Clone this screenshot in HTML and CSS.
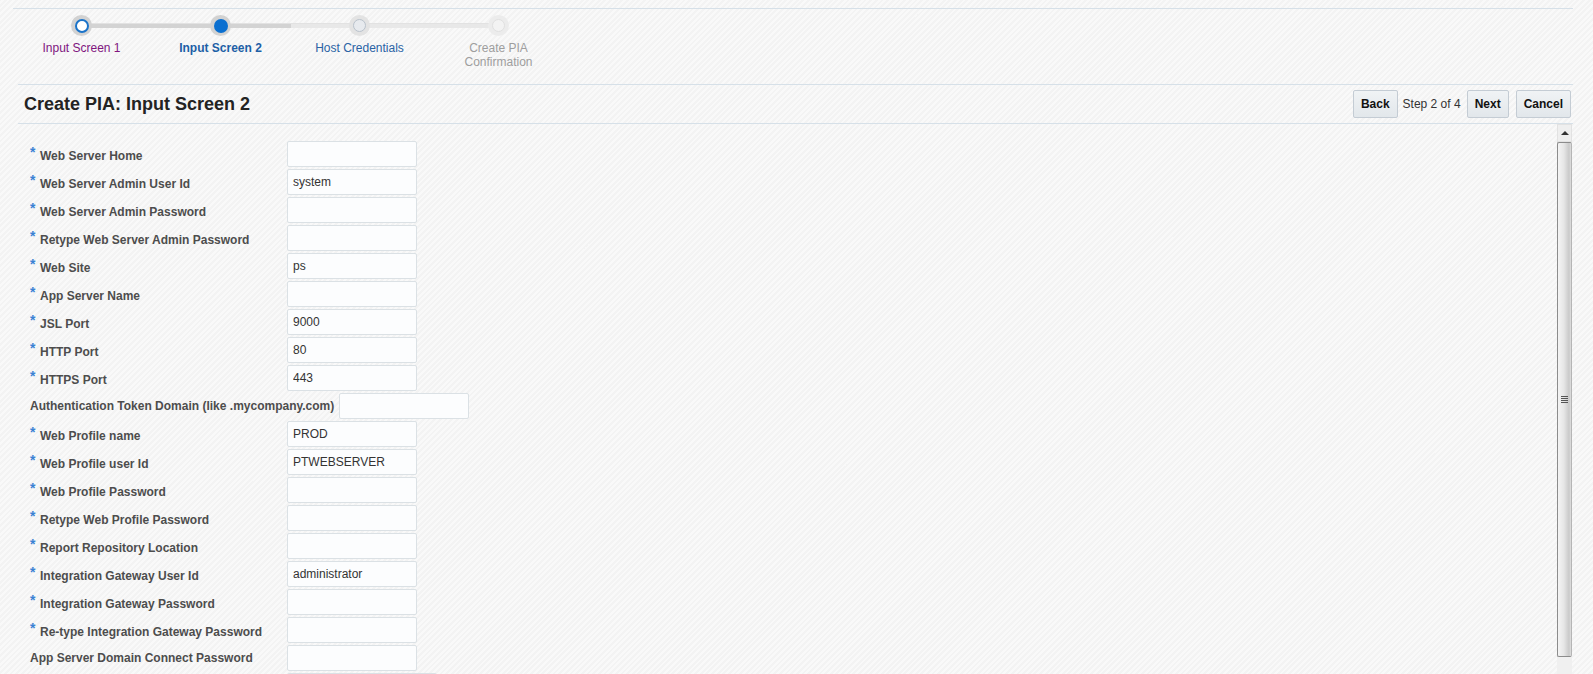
FILE: index.html
```html
<!DOCTYPE html>
<html lang="en">
<head>
<meta charset="utf-8">
<title>Create PIA: Input Screen 2</title>
<link rel="stylesheet" href="styles.css">
</head>
<body>
<div class="train">
  <div class="steps">
    <div class="step visited"><span class="dot"><span class="in"></span></span><span class="lbl">Input Screen 1</span></div>
    <div class="step current"><span class="dot"><span class="in"></span></span><span class="lbl">Input Screen 2</span></div>
    <div class="step next"><span class="dot"><span class="in"></span></span><span class="lbl">Host Credentials</span></div>
    <div class="step disabled"><span class="dot"><span class="in"></span></span><span class="lbl">Create PIA Confirmation</span></div>
  </div>
</div>
<div class="titlebar">
  <h1 class="title">Create PIA: Input Screen 2</h1>
  <div class="nav">
    <button class="btn" type="button">Back</button>
    <span class="stepno">Step 2 of 4</span>
    <button class="btn btn-next" type="button">Next</button>
    <button class="btn btn-cancel" type="button">Cancel</button>
  </div>
</div>
<div class="content">
  <form class="form">
    <div class="row"><label class="lbl-cell"><span class="req">*</span>Web Server Home</label><input class="field" type="text" value=""></div>
    <div class="row"><label class="lbl-cell"><span class="req">*</span>Web Server Admin User Id</label><input class="field" type="text" value="system"></div>
    <div class="row"><label class="lbl-cell"><span class="req">*</span>Web Server Admin Password</label><input class="field" type="password" value=""></div>
    <div class="row"><label class="lbl-cell"><span class="req">*</span>Retype Web Server Admin Password</label><input class="field" type="password" value=""></div>
    <div class="row"><label class="lbl-cell"><span class="req">*</span>Web Site</label><input class="field" type="text" value="ps"></div>
    <div class="row"><label class="lbl-cell"><span class="req">*</span>App Server Name</label><input class="field" type="text" value=""></div>
    <div class="row"><label class="lbl-cell"><span class="req">*</span>JSL Port</label><input class="field" type="text" value="9000"></div>
    <div class="row"><label class="lbl-cell"><span class="req">*</span>HTTP Port</label><input class="field" type="text" value="80"></div>
    <div class="row"><label class="lbl-cell"><span class="req">*</span>HTTPS Port</label><input class="field" type="text" value="443"></div>
    <div class="row"><label class="lbl-cell">Authentication Token Domain (like .mycompany.com)</label><input class="field" type="text" value=""></div>
    <div class="row"><label class="lbl-cell"><span class="req">*</span>Web Profile name</label><input class="field" type="text" value="PROD"></div>
    <div class="row"><label class="lbl-cell"><span class="req">*</span>Web Profile user Id</label><input class="field" type="text" value="PTWEBSERVER"></div>
    <div class="row"><label class="lbl-cell"><span class="req">*</span>Web Profile Password</label><input class="field" type="password" value=""></div>
    <div class="row"><label class="lbl-cell"><span class="req">*</span>Retype Web Profile Password</label><input class="field" type="password" value=""></div>
    <div class="row"><label class="lbl-cell"><span class="req">*</span>Report Repository Location</label><input class="field" type="text" value=""></div>
    <div class="row"><label class="lbl-cell"><span class="req">*</span>Integration Gateway User Id</label><input class="field" type="text" value="administrator"></div>
    <div class="row"><label class="lbl-cell"><span class="req">*</span>Integration Gateway Password</label><input class="field" type="password" value=""></div>
    <div class="row"><label class="lbl-cell"><span class="req">*</span>Re-type Integration Gateway Password</label><input class="field" type="password" value=""></div>
    <div class="row"><label class="lbl-cell">App Server Domain Connect Password</label><input class="field" type="password" value=""></div>
    <div class="row"><span class="lbl-cell"></span><input class="field wide" type="password" value=""></div>
  </form>
  <div class="vscroll">
    <div class="sb-up"><span class="sb-arrow"></span></div>
    <div class="sb-thumb"><span class="grip"></span></div>
    <div class="sb-track"></div>
  </div>
</div>
</body>
</html>
```
FILE: styles.css
```css
html, body {
  margin: 0;
  padding: 0;
}
body {
  height: 674px;
  overflow: hidden;
  padding-top: 8px;
  box-sizing: border-box;
  font-family: "Liberation Sans", Arial, sans-serif;
  font-size: 12px;
  color: #333;
  background-color: #f6f6f6;
  background-image: repeating-linear-gradient(-45deg, #f9f9f9 0 2px, #f3f3f3 2px 4px);
}

/* ---------- train ---------- */
.train {
  margin: 0 20px 0 13px;
  border-top: 1px solid #d6e0e8;
  height: 75px;
}
.steps {
  position: relative;
  display: flex;
  margin-left: -1px;
}
.steps::before {
  content: "";
  position: absolute;
  left: 70px;
  top: 14px;
  width: 418px;
  height: 5px;
  background: linear-gradient(to right, #d3d3d3 0 209px, #e8e8e8 209px);
  border-top: 1px solid #e2e2e2;
  box-sizing: border-box;
}
.step {
  width: 139px;
  display: flex;
  flex-direction: column;
  align-items: center;
}
.dot {
  position: relative;
  z-index: 1;
  margin-top: 6px;
  width: 21px;
  height: 21px;
  border-radius: 50%;
  background: #d2d2d2;
  display: flex;
  align-items: center;
  justify-content: center;
}
.in {
  width: 14px;
  height: 14px;
  border-radius: 50%;
  box-sizing: border-box;
}
.visited .in {
  background: #fff;
  border: 2px solid #1a73c9;
}
.current .in {
  background: #0a6fd0;
}
.next .dot {
  background: #e3e3e3;
}
.next .in {
  width: 13px;
  height: 13px;
  background: #e7eaee;
  border: 1px solid #b9c2cb;
}
.disabled .dot {
  background: #ececec;
}
.disabled .in {
  width: 13px;
  height: 13px;
  background: #f3f3f3;
  border: 1px solid #e0e0e0;
}
.lbl {
  margin-top: 5px;
  max-width: 96px;
  text-align: center;
  line-height: 14px;
  font-size: 12px;
}
.visited .lbl { color: #80167f; }
.current .lbl { color: #1d5fa6; font-weight: bold; }
.next .lbl { color: #2a63a5; }
.disabled .lbl { color: #9e9e9e; }

/* ---------- title bar ---------- */
.titlebar {
  margin: 0 20px 0 18px;
  border-top: 1px solid #d6e0e8;
  border-bottom: 1px solid #d6e0e8;
  height: 38px;
  display: flex;
  align-items: center;
  justify-content: space-between;
  padding: 0 2px 0 6px;
}
.title {
  margin: 0;
  font-size: 18px;
  font-weight: bold;
  color: #232323;
}
.nav {
  display: flex;
  align-items: center;
}
.btn {
  height: 28px;
  padding: 0 7px;
  font-family: "Liberation Sans", Arial, sans-serif;
  font-size: 12px;
  font-weight: bold;
  color: #111;
  background: linear-gradient(#f0f3f5, #e2e7eb);
  border: 1px solid #c4ccd4;
  border-radius: 2px;
  margin: 0;
}
.stepno {
  margin: 0 6px 0 5px;
  color: #333;
}
.btn-cancel {
  margin-left: 7px;
}

/* ---------- content ---------- */
.content {
  display: flex;
  margin: 0 21px 0 18px;
  height: 550px;
  overflow: hidden;
}
.form {
  flex: 1;
  padding: 17px 0 0 12px;
  display: flex;
  flex-direction: column;
  gap: 2px;
}
.row {
  display: flex;
  align-items: center;
  height: 26px;
  flex-shrink: 0;
}
.lbl-cell {
  min-width: 257px;
  box-sizing: border-box;
  padding-right: 5px;
  font-weight: bold;
  color: #4d4d4d;
  white-space: nowrap;
}
.req {
  display: inline-block;
  width: 10px;
  color: #3b82d3;
  font-size: 14px;
  font-weight: bold;
  vertical-align: 3px;
  line-height: 1;
}
.field {
  width: 130px;
  height: 26px;
  box-sizing: border-box;
  border: 1px solid #dbe1e5;
  border-radius: 2px;
  background: #fcfdfe;
  padding: 0 5px;
  margin: 0;
  font-family: "Liberation Sans", Arial, sans-serif;
  font-size: 12px;
  color: #333;
}
.field.wide {
  width: 150px;
}

/* ---------- scrollbar ---------- */
.vscroll {
  width: 15px;
  display: flex;
  flex-direction: column;
}
.sb-up {
  height: 18px;
  background: #efefef;
  border: 1px solid #e2e2e2;
  box-sizing: border-box;
  display: flex;
  align-items: center;
  justify-content: center;
}
.sb-arrow {
  width: 0;
  height: 0;
  border-left: 4px solid transparent;
  border-right: 4px solid transparent;
  border-bottom: 4px solid #333;
}
.sb-thumb {
  height: 515px;
  box-sizing: border-box;
  border: 1px solid #8c8c8c;
  border-right-color: #b5b5b5;
  border-radius: 2px;
  background: linear-gradient(to right, #f4f4f4 0%, #e6e6e6 45%, #c9c9c9 85%, #dedede 100%);
  display: flex;
  align-items: center;
  justify-content: center;
}
.grip {
  width: 7px;
  height: 7px;
  background: repeating-linear-gradient(#555 0 1px, transparent 1px 2px);
}
.sb-track {
  flex: 1;
  background: #f0f0f0;
}
```
